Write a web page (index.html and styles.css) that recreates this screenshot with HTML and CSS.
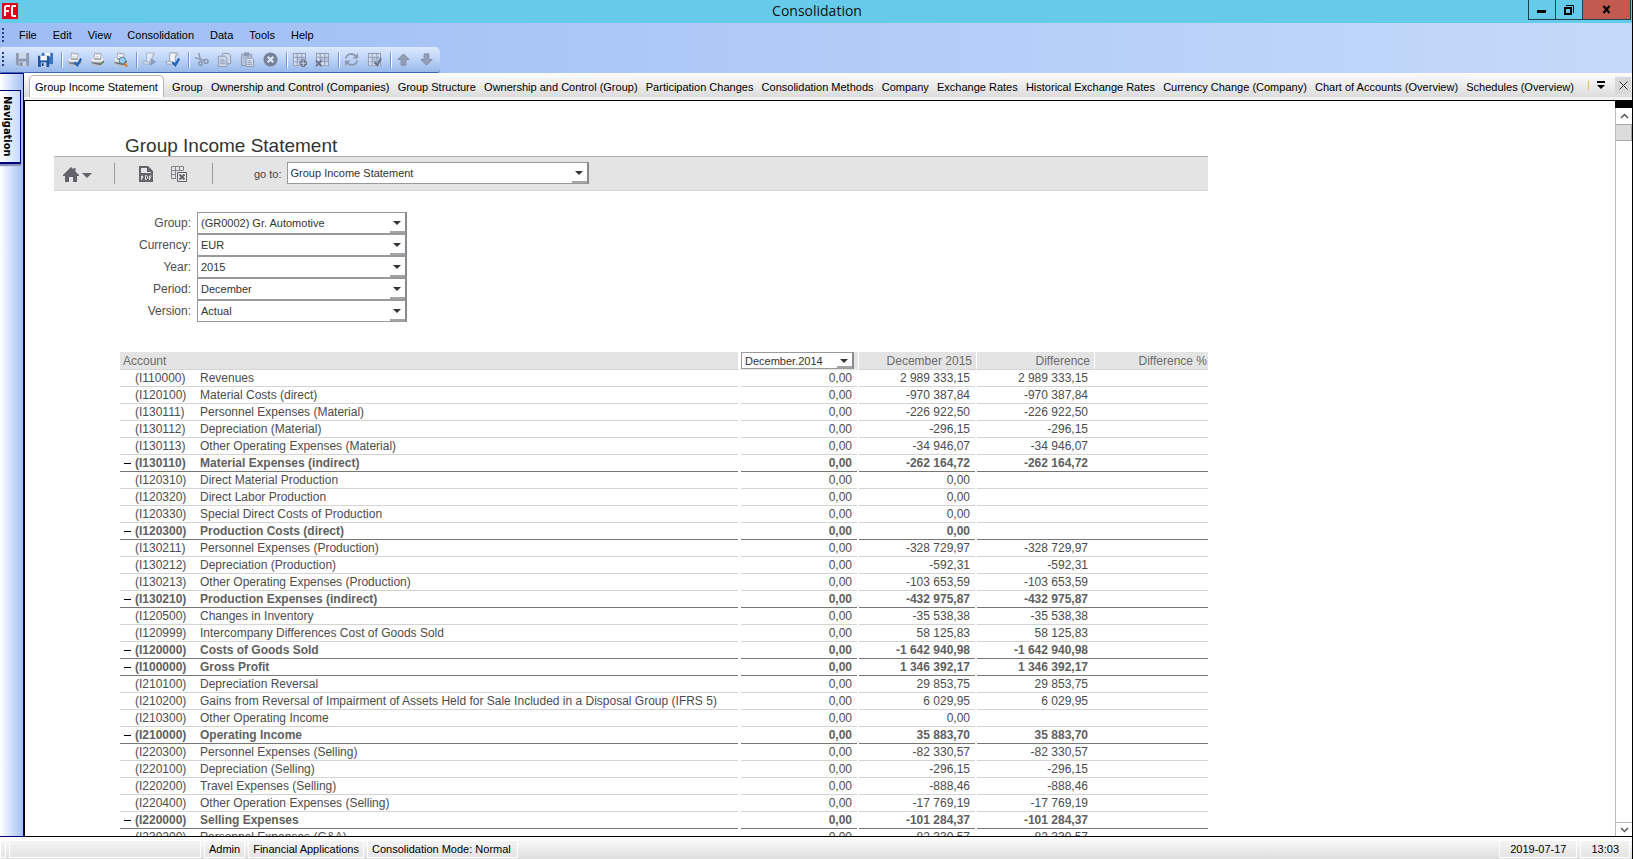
FILE: index.html
```html
<!DOCTYPE html>
<html lang="en">
<head>
<meta charset="utf-8">
<title>Consolidation</title>
<link rel="stylesheet" href="styles.css">
</head>
<body>
<svg class="defs" aria-hidden="true">
  <symbol id="printer" viewBox="0 0 16 16">
    <path d="M4 7 5 1l7 1-1 5z" fill="#fff" stroke="#8a93a0" stroke-width=".8"/>
    <path d="M1 8l3-2h8l3 2v4l-4 3H4l-3-3z" fill="#b9bdc5"/>
    <path d="M1 8l3-2h8l3 2-3 2H3z" fill="#f2f3f5"/>
    <path d="M4 7.500h8" stroke="#5d636c"/>
    <path d="M2 11l9 1 4-3v2l-4 3-9-2z" fill="#6a6f77"/>
    <path d="M6 2.500l4 .7M5.500 4.500l4 .7" stroke="#a9b0ba" stroke-width=".6"/>
  </symbol>
  <symbol id="scroll" viewBox="0 0 16 16">
    <path d="M5 1h8v3h-2v8H3l2-3z" fill="#f4f5f8" stroke="#8d95a5" stroke-width=".9"/>
    <path d="M1 10h7v3H2z" fill="#dfe3ea" stroke="#8d95a5" stroke-width=".8"/>
    <path d="M11 1h3v3h-3z" fill="#b5bccb"/>
  </symbol>
  <symbol id="grid" viewBox="0 0 16 16">
    <path d="M1 1h14v14H1z" fill="#8f9cb4"/>
    <path d="M2 2h3v3H2zM6 2h4v3H6zM11 2h3v3h-3zM2 6h3v4H2zM2 11h3v3H2zM6 11h4v3H6zM11 11h3v3h-3z" fill="#d3ddef"/>
    <path d="M6 6h4v4H6zM11 6h3v4h-3z" fill="#b4c2dc"/>
  </symbol>
</svg>
<div class="window">
  <header class="titlebar">
    <svg class="logo" viewBox="0 0 16 16"><path d="M0 0h16v16H0z" fill="#e0001b"/><path d="M3 13V4.500Q3 3 4.500 3H8M3 8h4M14 3h-2.500Q10 3 10 4.500v7Q10 13 11.500 13H14" fill="none" stroke="#fff" stroke-width="2"/></svg>
    <span class="caption">Consolidation</span>
    <div class="winbtns">
      <button aria-label="Minimize"><svg width="12" height="12"><path d="M1 6h9v3H1z"/></svg></button>
      <button aria-label="Restore"><svg width="12" height="12"><path d="M3 1.500h7.500V9" fill="none" stroke="#000"/><path d="M1 3h8v8H1zM3 5v4h4V5z" fill-rule="evenodd"/></svg></button>
      <button class="close" aria-label="Close"><svg width="12" height="12"><path d="M2.500 2l6 7M8.500 2l-6 7" stroke="#000" stroke-width="2.200"/></svg></button>
    </div>
  </header>
  <nav class="menubar">
    <i class="grip"></i>
    <button>File</button><button>Edit</button><button>View</button><button>Consolidation</button><button>Data</button><button>Tools</button><button>Help</button>
  </nav>
  <div class="toolrow">
    <div class="toolbar">
      <i class="grip"></i>
      <button aria-label="Save"><svg viewBox="0 0 16 16"><path d="M1 1h14v14H3l-2-2z" fill="#8f9bb2"/><path d="M4 1h8v6H4z" fill="#cfd9ea"/><path d="M4 10h8v5H4z" fill="#c3cee2"/><path d="M5 11h3v4H5z" fill="#8490a8"/></svg></button>
      <button aria-label="Save all"><svg viewBox="0 0 16 16"><path d="M4 1h12v12H4z" fill="#3a76bf"/><path d="M7 1h6v4H7z" fill="#fff"/><path d="M0 4h12v12H1l-1-1z" fill="#1d56a3"/><path d="M2.500 4h7v5h-7z" fill="#f4f8fd"/><path d="M3 11h6v5H3z" fill="#c3d6ef"/><path d="M4 12h2v3H4z" fill="#123f80"/></svg></button>
      <i class="sep"></i>
      <button aria-label="Print setup"><svg viewBox="0 0 16 16"><use href="#printer"/><path d="M8 11l3 3 4-7" fill="none" stroke="#1c62b8" stroke-width="2.400"/></svg></button>
      <button aria-label="Print"><svg viewBox="0 0 16 16"><use href="#printer"/><path d="M10 11h3v1h-3z" fill="#6cc04a"/></svg></button>
      <button aria-label="Print preview"><svg viewBox="0 0 16 16"><use href="#printer"/><path d="M12 12l3 3.500" stroke="#e07a1f" stroke-width="2.600"/><circle cx="10" cy="9" r="3.500" fill="#8fd0ee" stroke="#63798c"/></svg></button>
      <i class="sep"></i>
      <button aria-label="Run script"><svg viewBox="0 0 16 16" opacity=".65"><use href="#scroll"/><path d="M9 6l6 4.500-6 4.500z" fill="#76829a"/></svg></button>
      <button aria-label="Check script"><svg viewBox="0 0 16 16"><use href="#scroll"/><path d="M8 11l3 3 4-7" fill="none" stroke="#1c62b8" stroke-width="2.400"/></svg></button>
      <i class="sep"></i>
      <button aria-label="Cut"><svg viewBox="0 0 16 16" fill="none" stroke="#8d99b0" stroke-width="1.600"><path d="M5 1l2 8M1 6l10 3"/><circle cx="7" cy="12" r="2"/><circle cx="13" cy="10" r="2"/></svg></button>
      <button aria-label="Copy"><svg viewBox="0 0 16 16" fill="#cfd9ea" stroke="#8d99b0"><path d="M5.500 1.500h7l2 2v9h-9z"/><path d="M1.500 4.500h7l2 2v9h-9z"/><path d="M3 8.500h5M3 10.500h6M3 12.500h6"/></svg></button>
      <button aria-label="Paste"><svg viewBox="0 0 16 16" fill="#b4c1d8" stroke="#8d99b0"><path d="M1.500 2.500h11v12h-11z"/><path d="M4.500 1h5v3h-5z" fill="#8d99b0"/><path d="M6.500 6.500h6l2 2v7h-8z" fill="#d8e1ef"/><path d="M8 9.500h4M8 11.500h5M8 13.500h5"/></svg></button>
      <button aria-label="Cancel"><svg viewBox="0 0 16 16"><circle cx="8" cy="8" r="7.500" fill="#76829a"/><path d="M5 5l6 6M11 5l-6 6" stroke="#dce5f4" stroke-width="2.400"/></svg></button>
      <i class="sep"></i>
      <button aria-label="Add row"><svg viewBox="0 0 16 16"><use href="#grid"/><path d="M12 8v8M8 12h8" stroke="#66728a" stroke-width="3.600"/><path d="M12 9v6M9 12h6" stroke="#c4cfe2" stroke-width="1.200"/></svg></button>
      <button aria-label="Delete row"><svg viewBox="0 0 16 16"><use href="#grid"/><path d="M1 9l6 6M7 9l-6 6" stroke="#66728a" stroke-width="2"/></svg></button>
      <i class="sep"></i>
      <button aria-label="Refresh"><svg viewBox="0 0 16 16" fill="none" stroke="#8d99b0" stroke-width="2"><path d="M2 7c1-6 8-6 11-2M14 9c-1 6-8 6-11 2"/><path d="M15 1v6H9zM1 15V9h6z" fill="#8d99b0" stroke="none"/></svg></button>
      <button aria-label="Verify grid"><svg viewBox="0 0 16 16"><use href="#grid"/><path d="M8 11l3 3 4-7" fill="none" stroke="#66728a" stroke-width="2.200"/></svg></button>
      <i class="sep"></i>
      <button aria-label="Move up"><svg viewBox="0 0 16 16"><path d="M8 2l6 6h-3.500v6h-5V8H2z" fill="#939fb6" stroke="#7f8ba2"/></svg></button>
      <button aria-label="Move down"><svg viewBox="0 0 16 16"><path d="M8 14l6-6h-3.500V2h-5v6H2z" fill="#939fb6" stroke="#7f8ba2"/></svg></button>
    </div>
  </div>
  <div class="workspace">
    <aside class="sidenav"><button class="navtab">Navigation</button></aside>
    <div class="main">
      <div class="tabstrip">
        <div class="tabs">
          <button class="active">Group Income Statement</button><button>Group</button><button>Ownership and Control (Companies)</button><button>Group Structure</button><button>Ownership and Control (Group)</button><button>Participation Changes</button><button>Consolidation Methods</button><button>Company</button><button>Exchange Rates</button><button>Historical Exchange Rates</button><button>Currency Change (Company)</button><button>Chart of Accounts (Overview)</button><button>Schedules (Overview)</button>
        </div>
        <i class="cut"></i>
        <button class="overflow" aria-label="More tabs"><svg width="10" height="10"><path d="M1 1h8v2H1zM1 5h8L5 9z"/></svg></button>
        <button class="closetab" aria-label="Close tab"><svg width="11" height="11"><path d="M1.500 1.500l8 8M9.500 1.500l-8 8" stroke="#333"/></svg></button>
      </div>
      <div class="content">
        <main class="report">
          <h1>Group Income Statement</h1>
          <div class="actions">
            <button class="home" aria-label="Home"><svg width="30" height="18"><path d="M9 2l2.500 2.500V3h2v3.500L17 10v1h-2v6h-4v-5H7v5H3v-6H1v-1z" fill="#62636b"/><path d="M20 8h10l-5 5z" fill="#62636b"/></svg></button>
            <i class="bar"></i>
            <button class="pdf" aria-label="Export to PDF"><svg width="14" height="18"><path d="M0 1h9l5 5v11H0z" fill="#62636b"/><path d="M2 3h6v4h4v1H2z" fill="#e5e5e5"/><path d="M2.500 15v-4h1.200v2H2.500M6.500 10.500v4h1l1-1v-2l-1-1zM10.500 15v-4h2M10.500 12.800h1.500" fill="none" stroke="#e5e5e5"/></svg></button>
            <button class="xls" aria-label="Export to Excel"><svg width="17" height="18"><path d="M.5 1.500h12v4M.5 1.500v12H5M.5 5.500h12M.5 9.500H5M4.500 1.500v12M8.500 1.500v4" fill="none" stroke="#85868c"/><path d="M6.500 7.500h9v9h-9z" fill="#e5e5e5" stroke="#62636b"/><path d="M8.500 9.500l5 5M13.500 9.500l-5 5" stroke="#62636b" stroke-width="1.800"/></svg></button>
            <i class="bar"></i>
            <label for="goto">go to:</label>
            <span class="combo wide"><select id="goto"><option>Group Income Statement</option></select></span>
          </div>
          <form class="filters">
            <label for="f1">Group:</label><span class="combo"><select id="f1"><option>(GR0002) Gr. Automotive</option></select></span>
            <label for="f2">Currency:</label><span class="combo"><select id="f2"><option>EUR</option></select></span>
            <label for="f3">Year:</label><span class="combo"><select id="f3"><option>2015</option></select></span>
            <label for="f4">Period:</label><span class="combo"><select id="f4"><option>December</option></select></span>
            <label for="f5">Version:</label><span class="combo"><select id="f5"><option>Actual</option></select></span>
          </form>
          <table class="accounts">
            <colgroup><col class="c-tog"><col class="c-code"><col><col class="c-num"><col class="c-num"><col class="c-num"><col class="c-pct"></colgroup>
            <thead><tr><th colspan="3" class="acc">Account</th><th class="pick"><span class="combo small"><select aria-label="Comparison period"><option>December.2014</option></select></span></th><th>December 2015</th><th>Difference</th><th class="pct">Difference %</th></tr></thead>
            <tbody>
<tr><td></td><td>(I110000)</td><td>Revenues</td><td>0,00</td><td>2 989 333,15</td><td>2 989 333,15</td><td></td></tr>
<tr><td></td><td>(I120100)</td><td>Material Costs (direct)</td><td>0,00</td><td>-970 387,84</td><td>-970 387,84</td><td></td></tr>
<tr><td></td><td>(I130111)</td><td>Personnel Expenses (Material)</td><td>0,00</td><td>-226 922,50</td><td>-226 922,50</td><td></td></tr>
<tr><td></td><td>(I130112)</td><td>Depreciation (Material)</td><td>0,00</td><td>-296,15</td><td>-296,15</td><td></td></tr>
<tr><td></td><td>(I130113)</td><td>Other Operating Expenses (Material)</td><td>0,00</td><td>-34 946,07</td><td>-34 946,07</td><td></td></tr>
<tr class="sum"><td><button aria-label="Collapse"></button></td><td>(I130110)</td><td>Material Expenses (indirect)</td><td>0,00</td><td>-262 164,72</td><td>-262 164,72</td><td></td></tr>
<tr><td></td><td>(I120310)</td><td>Direct Material Production</td><td>0,00</td><td>0,00</td><td></td><td></td></tr>
<tr><td></td><td>(I120320)</td><td>Direct Labor Production</td><td>0,00</td><td>0,00</td><td></td><td></td></tr>
<tr><td></td><td>(I120330)</td><td>Special Direct Costs of Production</td><td>0,00</td><td>0,00</td><td></td><td></td></tr>
<tr class="sum"><td><button aria-label="Collapse"></button></td><td>(I120300)</td><td>Production Costs (direct)</td><td>0,00</td><td>0,00</td><td></td><td></td></tr>
<tr><td></td><td>(I130211)</td><td>Personnel Expenses (Production)</td><td>0,00</td><td>-328 729,97</td><td>-328 729,97</td><td></td></tr>
<tr><td></td><td>(I130212)</td><td>Depreciation (Production)</td><td>0,00</td><td>-592,31</td><td>-592,31</td><td></td></tr>
<tr><td></td><td>(I130213)</td><td>Other Operating Expenses (Production)</td><td>0,00</td><td>-103 653,59</td><td>-103 653,59</td><td></td></tr>
<tr class="sum"><td><button aria-label="Collapse"></button></td><td>(I130210)</td><td>Production Expenses (indirect)</td><td>0,00</td><td>-432 975,87</td><td>-432 975,87</td><td></td></tr>
<tr><td></td><td>(I120500)</td><td>Changes in Inventory</td><td>0,00</td><td>-35 538,38</td><td>-35 538,38</td><td></td></tr>
<tr><td></td><td>(I120999)</td><td>Intercompany Differences Cost of Goods Sold</td><td>0,00</td><td>58 125,83</td><td>58 125,83</td><td></td></tr>
<tr class="sum"><td><button aria-label="Collapse"></button></td><td>(I120000)</td><td>Costs of Goods Sold</td><td>0,00</td><td>-1 642 940,98</td><td>-1 642 940,98</td><td></td></tr>
<tr class="sum"><td><button aria-label="Collapse"></button></td><td>(I100000)</td><td>Gross Profit</td><td>0,00</td><td>1 346 392,17</td><td>1 346 392,17</td><td></td></tr>
<tr><td></td><td>(I210100)</td><td>Depreciation Reversal</td><td>0,00</td><td>29 853,75</td><td>29 853,75</td><td></td></tr>
<tr><td></td><td>(I210200)</td><td>Gains from Reversal of Impairment of Assets Held for Sale Included in a Disposal Group (IFRS 5)</td><td>0,00</td><td>6 029,95</td><td>6 029,95</td><td></td></tr>
<tr><td></td><td>(I210300)</td><td>Other Operating Income</td><td>0,00</td><td>0,00</td><td></td><td></td></tr>
<tr class="sum"><td><button aria-label="Collapse"></button></td><td>(I210000)</td><td>Operating Income</td><td>0,00</td><td>35 883,70</td><td>35 883,70</td><td></td></tr>
<tr><td></td><td>(I220300)</td><td>Personnel Expenses (Selling)</td><td>0,00</td><td>-82 330,57</td><td>-82 330,57</td><td></td></tr>
<tr><td></td><td>(I220100)</td><td>Depreciation (Selling)</td><td>0,00</td><td>-296,15</td><td>-296,15</td><td></td></tr>
<tr><td></td><td>(I220200)</td><td>Travel Expenses (Selling)</td><td>0,00</td><td>-888,46</td><td>-888,46</td><td></td></tr>
<tr><td></td><td>(I220400)</td><td>Other Operation Expenses (Selling)</td><td>0,00</td><td>-17 769,19</td><td>-17 769,19</td><td></td></tr>
<tr class="sum"><td><button aria-label="Collapse"></button></td><td>(I220000)</td><td>Selling Expenses</td><td>0,00</td><td>-101 284,37</td><td>-101 284,37</td><td></td></tr>
<tr><td></td><td>(I230200)</td><td>Personnel Expenses (G&amp;A)</td><td>0,00</td><td>-82 330,57</td><td>-82 330,57</td><td></td></tr>
            </tbody>
          </table>
        </main>
        <div class="scrollbar">
          <i class="stub"></i>
          <button aria-label="Scroll up"><svg width="9" height="6"><path d="M1 5l3.500-3.500L8 5" fill="none" stroke="#555" stroke-width="1.500"/></svg></button>
          <i class="thumb"></i><i class="track"></i>
          <button aria-label="Scroll down"><svg width="9" height="6"><path d="M1 1l3.500 3.500L8 1" fill="none" stroke="#555" stroke-width="1.500"/></svg></button>
        </div>
      </div>
    </div>
  </div>
  <footer class="status">
    <span class="s0"></span><span class="s1"></span><span>Admin</span><span>Financial Applications</span><span class="mode">Consolidation Mode: Normal</span>
    <span class="date">2019-07-17</span><span class="time">13:03</span>
  </footer>
</div>
</body>
</html>
```
FILE: styles.css
```css
* { box-sizing: border-box; }
body { margin: 0; font: 11px "Liberation Sans", Arial, sans-serif; color: #000; }
button { border: 0; padding: 0; margin: 0; background: none; font: inherit; color: inherit; display: flex; align-items: center; justify-content: center; white-space: nowrap; }
svg { display: block; flex: none; }
.defs { position: absolute; width: 0; height: 0; }

.window { height: 100vh; display: flex; flex-direction: column; border-right: 1px solid #000; overflow: hidden; background: linear-gradient(90deg, #9ebdf5, #c4dafa); }

.titlebar { height: 23px; flex: none; background: #66caea; display: grid; grid-template-columns: 1fr auto 1fr; align-items: start; padding-left: 2px; }
.logo { width: 16px; height: 16px; margin-top: 3px; }
.caption { font: 14px/22px "Open Sans", sans-serif; color: #111; }
.winbtns { display: flex; justify-self: end; border: 1px solid #1d4350; border-top: 0; margin-right: 1px; height: 20px; }
.winbtns button { width: 27px; height: 19px; border-right: 1px solid #1d4350; }
.winbtns button.close { width: 47px; border: 0; background: #c35a50; }

.menubar { height: 24px; flex: none; display: flex; align-items: center; gap: 16px; }
.menubar .grip { margin-right: -2px; }
.grip { width: 4px; height: 15px; margin-left: 1px; flex: none; background: repeating-linear-gradient(#27408b 0 2px, transparent 2px 4px) 1px 0 / 2px 100% no-repeat; }

.toolrow { flex: none; height: 26px; display: flex; }
.toolbar { display: flex; align-items: center; padding-right: 2px; border-radius: 2px 5px 3px 2px; border-bottom: 1px solid #3b68b0; background: linear-gradient(#dce9fd, #bdd3f6 50%, #98b9ea); }
.toolbar .grip { margin-right: 6px; }
.toolbar button { width: 23px; height: 24px; }
.toolbar svg { width: 15px; height: 15px; }
.sep { width: 6px; height: 16px; flex: none; border-right: 1px solid #fff; background: linear-gradient(#6d93d0, #6d93d0) right / 1px 100% no-repeat; }

.workspace { flex: 1; min-height: 0; display: flex; }
.sidenav { width: 24px; flex: none; border: solid #000080; border-width: 1px 1px 1px 0; padding-top: 16px; background: linear-gradient(90deg, #fff, #d9e6fc 40%, #a3c0f6); }
.navtab { width: 21px; height: 74px; border: 1px solid #000080; border-width: 1px 1px 2px 0; background: linear-gradient(90deg, #fff, #c6d9fa); writing-mode: vertical-rl; font: bold 11px "DejaVu Sans Condensed", "DejaVu Sans", sans-serif; box-shadow: 0 2px 1px #8a94b8; padding-right: 6px; }

.main { flex: 1; min-width: 0; display: flex; flex-direction: column; }
.tabstrip { height: 27px; flex: none; display: flex; align-items: center; padding-left: 5px; border-bottom: 3px solid #f3f3f3; background: linear-gradient(#fcfcfc, #dcdcdc); }
.tabs { flex: 1; display: flex; justify-content: space-between; align-items: flex-end; align-self: stretch; }
.tabs button { height: 22px; padding-top: 2px; }
.tabs .active { padding: 1px 5px 0; border: 1px solid #b5b5b5; border-bottom: 0; border-radius: 5px 5px 0 0; background: #fff; }
.cut { width: 1px; height: 9px; margin-left: 14px; background: #e3b778; }
.overflow { width: 12px; height: 16px; margin-left: 6px; }
.closetab { width: 16px; height: 17px; margin: 0 1px 0 8px; background: #d9d9d9; }

.content { flex: 1; min-height: 0; display: flex; border: solid #000; border-width: 1px 0 1px 1px; background: #fff; }
.report { flex: 1; min-width: 0; overflow: hidden; padding: 34px 29px 0; font-size: 12px; color: #4c4c4c; }
.report > * { max-width: 1154px; }
h1 { margin: 0; padding-left: 71px; font-size: 19px; line-height: 21px; font-weight: normal; color: #333; }
.actions { height: 35px; display: flex; align-items: center; border-top: 1px solid #b0b0b0; border-bottom: 1px solid #d4d4d4; background: #e4e4e4; padding-left: 8px; }
.bar { width: 1px; height: 21px; background: #999; }
.actions .bar { margin-left: 22px; }
.actions .pdf { margin-left: 24px; }
.actions .xls { margin-left: 18px; }
.actions .xls + .bar { margin-left: 24px; }
.actions .bar + label { margin-left: 41px; }
.actions label { font-size: 11px; margin-right: 5px; color: #444; }

.combo { position: relative; display: block; width: 210px; height: 22px; border: 1px solid #9a9a9a; border-right: 2px solid #88898d; background: #fff; }
.combo select { appearance: none; display: block; width: 100%; height: 100%; border: 0; outline: 0; margin: 0; padding: 0 18px 0 3px; background: none; font: 11px "Liberation Sans", Arial, sans-serif; color: #333; }
.combo::after { content: ""; position: absolute; right: 0; bottom: 0; width: 15px; height: 2px; background: #a3a3a8; pointer-events: none; }
.combo::before { content: ""; position: absolute; right: 4px; top: 50%; margin-top: -2px; border: 4px solid transparent; border-top: 4px solid #333; border-bottom: 0; pointer-events: none; }
.combo.wide { width: 302px; margin-bottom: 2px; }
.combo.small { width: 113px; height: 17px; }

.filters { display: grid; grid-template-columns: 137px auto; column-gap: 6px; justify-content: start; align-items: center; margin: 21px 0 30px; }
.filters label { text-align: right; }

.accounts { width: calc(100% - 66px); max-width: 1088px; margin-left: 66px; table-layout: fixed; border-spacing: 0; }
.c-tog { width: 15px; }
.c-code { width: 65px; }
.c-num { width: 118px; }
.c-pct { width: 113px; }
.accounts th { height: 18px; padding: 1px 4px 0 0; background: #e4e4e4; background-clip: padding-box; border-right: 1px solid #fff; border-bottom: 1px solid #d4d4d4; font-weight: normal; text-align: right; color: #6c6c6c; line-height: 15px; }
.accounts th.acc { text-align: left; padding-left: 3px; border-right: 3px solid #fff; }
.accounts th.pick { padding: 0; border-bottom: 0; text-align: left; vertical-align: top; }
.accounts th.pct { padding-right: 1px; border-right: 0; }
.accounts td { height: 17px; padding: 0; line-height: 15px; white-space: nowrap; text-align: left; border-right: 0 solid #fff; background: linear-gradient(#d4d4d4, #d4d4d4) bottom / 100% 1px no-repeat; }
.accounts td:nth-child(n+4) { text-align: right; }
.accounts td:nth-child(3) { border-right-width: 3px; }
.accounts td:nth-child(4), .accounts td:nth-child(5) { padding-right: 5px; border-right-width: 2px; }
.accounts td:nth-child(6) { padding-right: 7px; }
.accounts .sum td { font-weight: bold; color: #606060; background-image: linear-gradient(#777, #777); }
.accounts td button { width: 9px; height: 9px; margin-left: 3px; }
.accounts td button::before { content: ""; width: 7px; height: 1px; background: #000; }

.scrollbar { width: 17px; flex: none; display: flex; flex-direction: column; border-left: 1px solid #bbb; }
.scrollbar .stub { height: 7px; background: #000; margin-left: -1px; }
.scrollbar button { height: 16px; flex: none; }
.scrollbar button:last-child { height: 13px; }
.thumb { height: 17px; border: 1px solid #a8a8a8; border-left: 0; background: #dcdcdc; }
.track { flex: 1; border-bottom: 1px solid #bbb; }

.status { height: 22px; flex: none; display: flex; align-items: center; gap: 3px; padding: 1px 2px 0 0; background: linear-gradient(#fdfdfd, #dedede); }
.status span { height: 18px; line-height: 17px; padding: 0 4px; border: 1px solid #fff; background: linear-gradient(#f4f4f4, #e4e4e4); white-space: nowrap; }
.status .s0 { width: 6px; padding: 0; }
.status .s1 { width: 192px; }
.status .mode { padding-right: 6px; }
.status .date { margin-left: auto; padding: 0 10px; }
.status .time { padding: 0 10px; }
```
